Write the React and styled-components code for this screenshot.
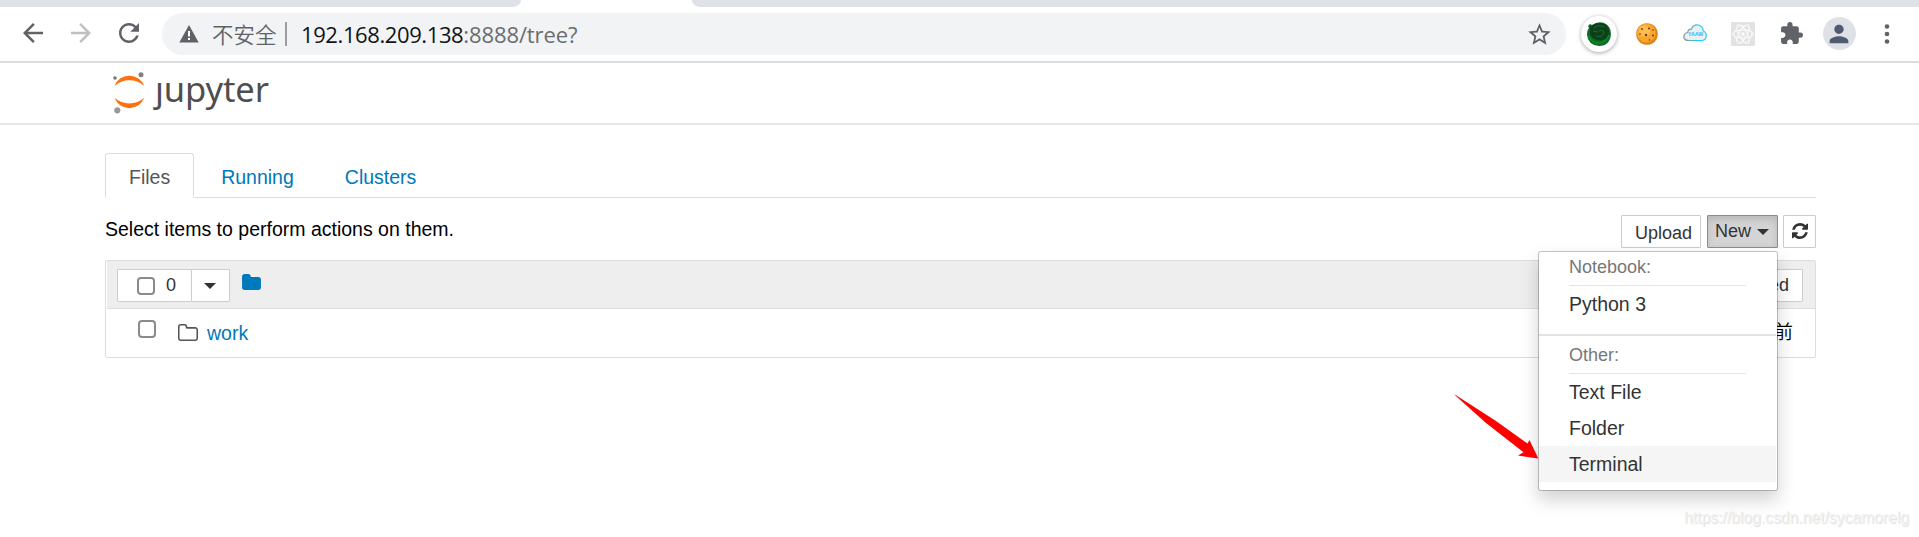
import React from "react";
import styled, { createGlobalStyle } from "styled-components";

const Global = createGlobalStyle`
  * { box-sizing: border-box; }
  body { margin: 0; background: #fff; font-family: "Liberation Sans", Arial, "Noto Sans CJK SC", sans-serif; font-size: 19.5px; color: #000; }
`;

const Page = styled.div`position: relative; width: 1919px; height: 537px; overflow: hidden; background: #fff;`;

/* Browser chrome */
const TabStrip = styled.div`display: flex; justify-content: space-between; height: 7px; background: #fff;`;
const InactiveTabs = styled.div`
  width: ${(p) => p.$w}px; height: 7px; background: #dee1e6;
  border-radius: ${(p) => (p.$side === "left" ? "0 0 11px 0 / 0 0 9px 0" : "0 0 0 11px / 0 0 0 9px")};
`;
const Toolbar = styled.div`
  display: flex; align-items: center; gap: 18px; height: 56px; padding: 0 8px 2px 18px;
  border-bottom: 2px solid #dadce0;
`;
const Glyph = styled.svg`display: block; flex: none; width: ${(p) => p.$s}px; height: ${(p) => p.$s}px; fill: ${(p) => p.$c || "#5f6368"};`;
const Omnibox = styled.div`
  display: flex; align-items: center; flex: none; width: 1404px; height: 42px; margin-top: 2px;
  padding: 0 13px 0 17px; border-radius: 21px; background: #f1f3f4;
`;
const Insecure = styled.span`margin-left: 13px; width: 65px; font: 350 21.5px/30px "Noto Sans CJK SC", sans-serif; color: #5f6368; white-space: nowrap;`;
const Separator = styled.span`width: 2px; height: 24px; margin: 0 14px 0 8px; background: #9a9da1;`;
const Url = styled.span`flex: 1; padding-bottom: 1px; font: 22px/30px "Open Sans", "Noto Sans", sans-serif; letter-spacing: -0.1px; color: #6a6d70; white-space: nowrap;`;
const Host = styled.span`color: #111417; letter-spacing: -0.4px;`;
const Extensions = styled.div`display: flex; align-items: center; margin: 1px 0 0 -9px;`;
const Extension = styled.div`display: flex; flex: none; width: 48px; height: 40px; align-items: center; justify-content: center;`;
const Disc = styled.div`
  display: flex; align-items: center; justify-content: center; width: ${(p) => p.$s}px; height: ${(p) => p.$s}px;
  border-radius: 50%; background: ${(p) => p.$bg}; box-shadow: ${(p) => (p.$raised ? "0 1px 4px rgba(0,0,0,.35)" : "none")};
`;

/* Notebook page */
const Header = styled.header`height: 62px; padding: 8px 0 0 112px; border-bottom: 2px solid #e7e7e7;`;
const Brand = styled.div`display: flex;`;
const BrandName = styled.span`margin: -2px 0 0 9px; font: 34.5px/40px "Noto Sans", sans-serif; color: #4e4e4e; letter-spacing: -0.1px;`;
const Container = styled.main`width: 1711px; margin: 28px 0 0 105px;`;
const Tabs = styled.nav`display: flex; height: 45px; border-bottom: 1px solid #ddd;`;
const Tab = styled.a`
  height: 45px; padding: 0 23px; line-height: 46px; border: 1px solid transparent; margin-right: 3px;
  ${(p) => p.$active ? "border-color: #ddd #ddd #fff; border-radius: 3px 3px 0 0; color: #555; background: #fff;" : "color: #0078bc;"}
`;
const Actions = styled.div`display: flex; justify-content: space-between; height: 62px; padding-top: 17px;`;
const Hint = styled.div`padding-top: 2px; line-height: 24px;`;
const Buttons = styled.div`display: flex;`;
const Button = styled.button`
  display: flex; align-items: center; justify-content: flex-end; width: ${(p) => p.$w}px; height: 33px;
  margin-left: ${(p) => p.$ml || 0}px; padding: ${(p) => p.$pad || "0"}; border: 1px solid ${(p) => (p.$open ? "#8c8c8c" : "#ccc")};
  border-radius: 1px; background: ${(p) => (p.$open ? "#d4d4d4" : "#fff")};
  box-shadow: ${(p) => (p.$open ? "inset 0 4px 7px rgba(0,0,0,.125)" : "none")};
  font: 18px/27px "Liberation Sans", Arial, sans-serif; color: #333; white-space: nowrap;
`;
const Caret = styled.span`
  width: 0; height: 0; margin-left: ${(p) => p.$ml || 0}px; border: 6px solid transparent;
  border-top-color: #333; border-bottom: 0;
`;
const Listing = styled.section`border: 1px solid #ddd; border-radius: 2px; height: 98px;`;
const ListHeader = styled.div`display: flex; align-items: flex-start; height: 48px; padding: 8px 12px 0 10px; margin-left: 1px; background: #eee; border-bottom: 1px solid #ddd;`;
const Row = styled.div`display: flex; height: 48px; padding: 11px 22px 0 32px; line-height: 26px;`;
const Checkbox = styled.span`flex: none; width: 18px; height: 18px; border: 2px solid #8a8a8a; border-radius: 4px; background: #fff; margin-right: ${(p) => p.$mr || 0}px;`;
const Icon = styled.svg`display: block; flex: none; width: ${(p) => p.$w}px; height: ${(p) => p.$h}px; margin: ${(p) => p.$m || "0"}; fill: ${(p) => p.$c};`;
const FileLink = styled.a`color: #0078bc;`;
const Push = styled.div`margin-left: auto;`;
const Modified = styled.div`margin: -2px 0 0 auto; font-family: "Noto Sans CJK SC", sans-serif; font-weight: 350;`;

/* Overlays */
const Menu = styled.div`
  position: absolute; left: 1538px; top: 251px; width: 240px; height: 240px; background: #fff;
  border: 1px solid rgba(0,0,0,.22); border-radius: 3px; background-clip: padding-box; box-shadow: 0 9px 18px rgba(0,0,0,.175);
`;
const MenuLabel = styled.div`height: ${(p) => p.$h}px; width: 177px; margin-left: 30px; padding-top: ${(p) => p.$h - 31}px; font-size: 18px; line-height: 24px; color: #777; border-bottom: 1px solid #e5e5e5;`;
const MenuItem = styled.div`height: 36px; margin-right: 1px; padding-left: 30px; line-height: 36px; color: #333; background: ${(p) => (p.$hover ? "#f5f5f5" : "transparent")};`;
const Divider = styled.div`height: 2px; margin: 12px 1px 0 0; background: #e3e3e3;`;
const Pointer = styled.svg`position: absolute; left: 1450px; top: 390px; width: 92px; height: 74px;`;
const Watermark = styled.div`position: absolute; left: 1684px; top: 506px; font-size: 15.7px; line-height: 24px; color: #f2f2f2; text-shadow: 1px 1px 1px #ddd; white-space: nowrap;`;

const BACK = "M20 11H7.83l5.59-5.59L12 4l-8 8 8 8 1.41-1.41L7.83 13H20v-2z";
const FORWARD = "M12 4l-1.41 1.41L16.17 11H4v2h12.17l-5.58 5.59L12 20l8-8z";
const RELOAD = "M17.65 6.35C16.2 4.9 14.21 4 12 4c-4.42 0-7.99 3.58-7.99 8s3.57 8 7.99 8c3.73 0 6.84-2.55 7.73-6h-2.08c-.82 2.33-3.04 4-5.65 4-3.31 0-6-2.69-6-6s2.69-6 6-6c1.66 0 3.14.69 4.22 1.78L13 11h7V4l-2.35 2.35z";
const STAR = "M22 9.24l-7.19-.62L12 2 9.19 8.63 2 9.24l5.46 4.73L5.82 21 12 17.27 18.18 21l-1.63-7.03L22 9.24zM12 15.4l-3.76 2.27 1-4.28-3.32-2.88 4.38-.38L12 6.1l1.71 4.04 4.38.38-3.32 2.88 1 4.28L12 15.4z";
const PUZZLE = "M20.5 11H19V7c0-1.1-.9-2-2-2h-4V3.5a2.5 2.5 0 0 0-5 0V5H4c-1.1 0-1.99.9-1.99 2v3.8H3.5c1.49 0 2.7 1.21 2.7 2.7s-1.21 2.7-2.7 2.7H2V20c0 1.1.9 2 2 2h3.8v-1.5c0-1.49 1.21-2.7 2.7-2.7 1.49 0 2.7 1.21 2.7 2.7V22H17c1.1 0 2-.9 2-2v-4h1.5a2.5 2.5 0 0 0 0-5z";
const PERSON = "M12 12c2.21 0 4-1.79 4-4s-1.79-4-4-4-4 1.79-4 4 1.79 4 4 4zm0 2c-2.67 0-8 1.34-8 4v2h16v-2c0-2.66-5.33-4-8-4z";
const FOLDER = "M1664 608v704q0 92-66 158t-158 66h-1216q-92 0-158-66t-66-158v-960q0-92 66-158t158-66h320q92 0 158 66t66 158v32h672q92 0 158 66t66 158z";
const FOLDER_O = "M1536 1312v-704q0-40-28-68t-68-28h-704q-40 0-68-28t-28-68v-64q0-40-28-68t-68-28h-320q-40 0-68 28t-28 68v960q0 40 28 68t68 28h1216q40 0 68-28t28-68zm128-704v704q0 92-66 158t-158 66h-1216q-92 0-158-66t-66-158v-960q0-92 66-158t158-66h320q92 0 158 66t66 158v32h672q92 0 158 66t66 158z";
const REFRESH = "M1511 928q0 5-1 7-64 268-268 434.5t-478 166.5q-146 0-282.5-55t-243.5-157l-129 129q-19 19-45 19t-45-19-19-45v-448q0-26 19-45t45-19h448q26 0 45 19t19 45-19 45l-137 137q71 66 161 102t187 36q134 0 250-65t186-179q11-17 53-117 8-23 30-23h192q13 0 22.5 9.5t9.5 22.5zm25-800v448q0 26-19 45t-45 19h-448q-26 0-45-19t-19-45 19-45l138-138q-148-137-349-137-134 0-250 65t-186 179q-11 17-53 117-8 23-30 23h-199q-13 0-22.5-9.5t-9.5-22.5v-7q65-268 270-434.5t480-166.5q146 0 284 55.5t245 156.5l130-129q19-19 45-19t45 19 19 45z";

const Material = ({ d, s, c }) => <Glyph viewBox="0 0 24 24" $s={s} $c={c}><path d={d} /></Glyph>;

const GreenFox = () => (
  <Glyph viewBox="0 0 24 24" $s={24}>
    <path d="M1 4 L3 2 L5 3 Q11-1 17 1 Q24 4 24 12 Q23 24 12 24 Q1 23 0 13 Q0 8 2 6Z" fill="#0e6a24" />
    <path d="M3 5Q10-1 18 2Q23 6 22 13Q18 20 10 18Q5 17 3 12Z" fill="#0b4019" />
    <path d="M7 6q4-4 10-1M6 9l5 1M9 14q7 2 8-4q-2-3-5-1" stroke="#1c6b33" fill="none" />
    <path d="M2 14Q5 22 13 21Q20 19 22 13" stroke="#098a2b" strokeWidth="1.5" fill="none" />
  </Glyph>
);
const Cookie = () => (
  <Glyph viewBox="0 0 22 22" $s={22}>
    <circle cx="11" cy="11" r="10.8" fill="#dd8416" />
    <circle cx="10.3" cy="10" r="9.4" fill="#f9a72f" />
    <circle cx="8.5" cy="8" r="5.5" fill="#ffbd50" />
    <g fill="#693711"><circle cx="6" cy="6" r=".9" /><circle cx="13" cy="5.5" r="1" /><circle cx="17" cy="7" r=".8" /><circle cx="10" cy="12" r="1.2" /><circle cx="4" cy="11" r=".8" /><circle cx="17" cy="12.5" r="1" /><circle cx="13.5" cy="17" r=".8" /></g>
  </Glyph>
);
const Cloud = () => (
  <Glyph viewBox="0 0 24 24" $s={24}>
    <defs><linearGradient id="cloudEdge" x1="0" x2="1"><stop offset=".1" stopColor="#8b98a0" /><stop offset=".6" stopColor="#20caff" /></linearGradient></defs>
    <path d="M5.5 18.5Q1 18.5.8 14.6Q1 11 4.7 10.5Q5 7 8.3 7.2Q10.5 2.3 15 3Q20 4 20.2 9Q23.4 10 23.3 14Q23 18.2 19 18.5Z" fill="#eceff0" stroke="url(#cloudEdge)" strokeWidth="1.2" />
    <text x="12.5" y="14" textAnchor="middle" fontFamily="Liberation Sans" fontSize="5.2" fontWeight="700" fill="#20c3f5">YAAW</text>
  </Glyph>
);
const Atom = () => (
  <Glyph viewBox="0 0 24 24" $s={24}>
    <rect width="24" height="24" rx="1" fill="#e2e2e2" />
    <g fill="none" stroke="#fff" strokeWidth=".9"><ellipse cx="12" cy="12" rx="10.5" ry="4" /><ellipse cx="12" cy="12" rx="10.5" ry="4" transform="rotate(60 12 12)" /><ellipse cx="12" cy="12" rx="10.5" ry="4" transform="rotate(120 12 12)" /><circle cx="12" cy="12" r="8.6" strokeDasharray="2 1.2" /></g>
    <circle cx="12" cy="12" r="1.8" fill="#fff" />
  </Glyph>
);

const Chrome = () => (
  <>
    <TabStrip><InactiveTabs $w={521} $side="left" /><InactiveTabs $w={1227} $side="right" /></TabStrip>
    <Toolbar>
      <Material d={BACK} s={30} />
      <Material d={FORWARD} s={30} c="#bdbfc1" />
      <Material d={RELOAD} s={30} />
      <Omnibox>
        <Glyph viewBox="0 0 20 20" $s={20}><path d="M10 1L19.7 18.5H.3Z" /><path d="M9 7h2v5.4H9zM9 14h2v2H9z" fill="#fff" /></Glyph>
        <Insecure>不安全</Insecure>
        <Separator />
        <Url><Host>192.168.209.138</Host>:8888/tree?</Url>
        <Material d={STAR} s={27} />
      </Omnibox>
      <Extensions>
        <Extension><Disc $s={36} $bg="#fff" $raised><GreenFox /></Disc></Extension>
        <Extension><Cookie /></Extension>
        <Extension><Cloud /></Extension>
        <Extension><Atom /></Extension>
        <Extension><Material d={PUZZLE} s={25} /></Extension>
        <Extension><Disc $s={33} $bg="#dee1e6"><Material d={PERSON} s={28} c="#4f5b70" /></Disc></Extension>
        <Extension><Glyph viewBox="0 0 24 24" $s={24}><circle cx="12" cy="4.5" r="2.3" /><circle cx="12" cy="12" r="2.3" /><circle cx="12" cy="19.5" r="2.3" /></Glyph></Extension>
      </Extensions>
    </Toolbar>
  </>
);

const Logo = () => (
  <Brand>
    <Icon viewBox="0 0 34 44" $w={34} $h={44} $c="#ff6f0b">
      <path d="M2.5 15Q6.5 5 17.3 4.8Q28 5 32.3 15Q26 9.2 17.3 9.3Q9 9.2 2.5 15Z" />
      <path d="M2.5 26.8Q9 32.5 17.3 32.5Q26 32.5 32.3 26.8Q28 36.8 17.3 37.2Q6.5 36.8 2.5 26.8Z" />
      <circle cx="3" cy="7" r="1.8" fill="#777" /><circle cx="29" cy="3.8" r="2.5" fill="#818181" /><circle cx="5.3" cy="39.3" r="3.1" fill="#999" />
    </Icon>
    <BrandName>ȷupyter</BrandName>
  </Brand>
);

export default function App() {
  return (
    <Page>
      <Global />
      <Chrome />
      <Header><Logo /></Header>
      <Container>
        <Tabs><Tab $active>Files</Tab><Tab>Running</Tab><Tab>Clusters</Tab></Tabs>
        <Actions>
          <Hint>Select items to perform actions on them.</Hint>
          <Buttons>
            <Button $w={80} $pad="4px 8px 0 0">Upload</Button>
            <Button $w={71} $ml={6} $open $pad="0 8px 0 0">New<Caret $ml={6} /></Button>
            <Button $w={33} $ml={5} $pad="0 7px 2px 0"><Icon viewBox="0 0 1536 1536" $w={16} $h={16} $c="#333"><path d={REFRESH} /></Icon></Button>
          </Buttons>
        </Actions>
        <Listing>
          <ListHeader>
            <Button $w={75} $pad="0 15px 0 0"><Checkbox $mr={11} />0</Button>
            <Button $w={39} $ml={-1} $pad="0 13px 0 0"><Caret /></Button>
            <Icon viewBox="0 128 1664 1408" $w={19} $h={16} $m="5px 0 0 12px" $c="#0078bc"><path d={FOLDER} /></Icon>
            <Push><Button $w={140} $pad="0 13px 0 0">Last Modified</Button></Push>
          </ListHeader>
          <Row>
            <Checkbox $mr={22} />
            <Icon viewBox="0 128 1664 1408" $w={20} $h={17} $m="4px 9px 0 0" $c="#555"><path d={FOLDER_O} /></Icon>
            <FileLink>work</FileLink>
            <Modified>前</Modified>
          </Row>
        </Listing>
      </Container>
      <Menu>
        <MenuLabel $h={34}>Notebook:</MenuLabel>
        <MenuItem>Python 3</MenuItem>
        <Divider />
        <MenuLabel $h={38}>Other:</MenuLabel>
        <MenuItem>Text File</MenuItem>
        <MenuItem>Folder</MenuItem>
        <MenuItem $hover>Terminal</MenuItem>
      </Menu>
      <Pointer viewBox="0 0 92 74"><path d="M4.5 4.8Q5 4.3 6 5.3L46 31L77.5 53.5L79.5 50L88.3 68.5L68 65.5L73.5 62.3L36 33Z" fill="#f00" /></Pointer>
      <Watermark>https://blog.csdn.net/sycamorelg</Watermark>
    </Page>
  );
}
